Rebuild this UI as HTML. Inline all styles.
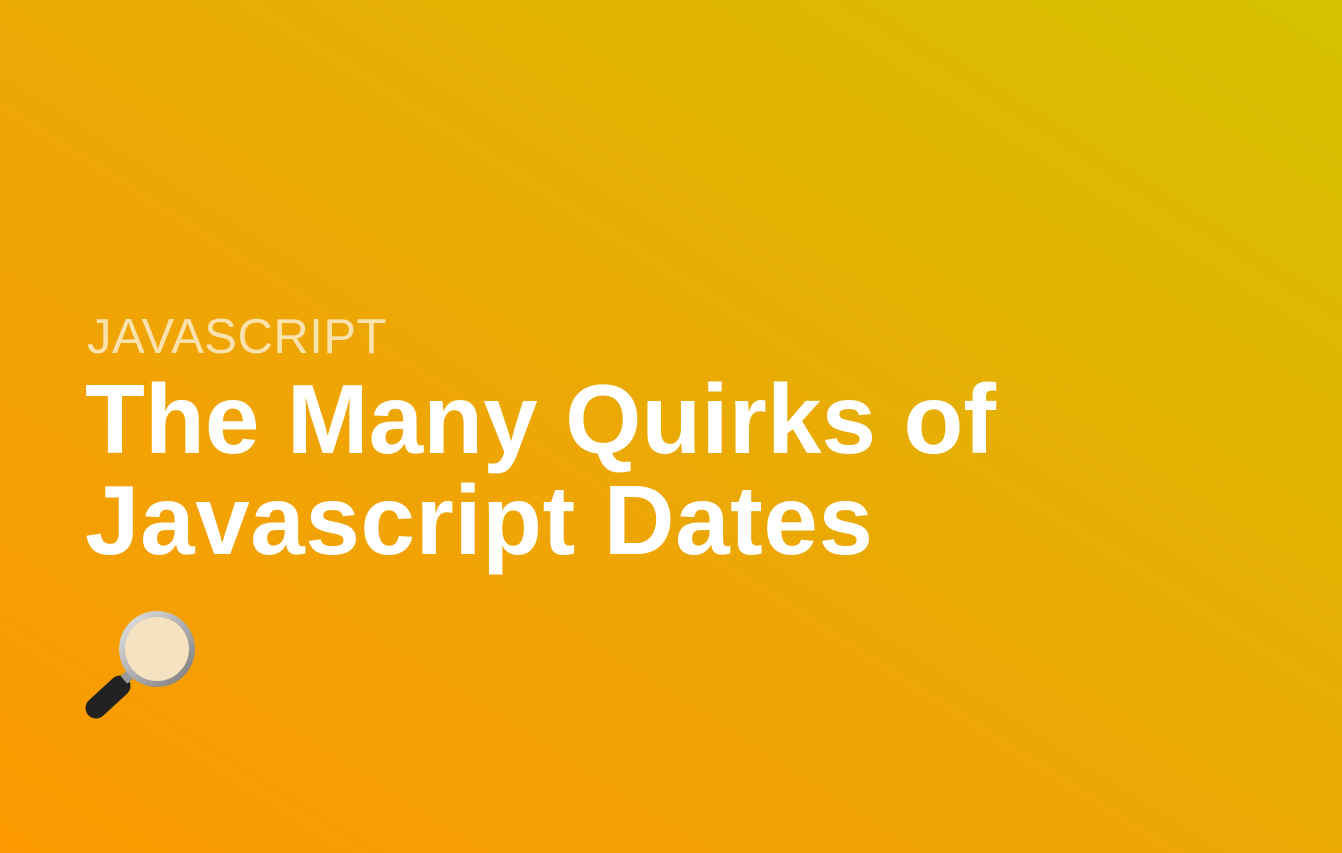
<!DOCTYPE html>
<html><head><style>
html,body{margin:0;padding:0}
body{width:1342px;height:853px;overflow:hidden;background:linear-gradient(to top right,#fc9900 0%,#eda705 45%,#d5c100 100%);font-family:"Liberation Sans",sans-serif;position:relative}
.k{position:absolute;left:87px;top:309px;font-size:49px;color:rgba(255,255,255,.68);letter-spacing:0.5px}
.t{position:absolute;left:85px;top:369px;font-size:98px;font-weight:bold;color:#fff;line-height:101px;letter-spacing:0.1px}
.t span{letter-spacing:0.6px}
svg{position:absolute;left:80px;top:600px}
</style></head><body>
<div class="k">JAVASCRIPT</div>
<div class="t">The Many Quirks of<br><span>Javascript Dates</span></div>
<svg width="130" height="130" viewBox="0 0 130 130">
<defs><linearGradient id="r" x1="0" y1="0" x2="1" y2="1"><stop offset="0" stop-color="#e8e8e8"/><stop offset="1" stop-color="#777"/></linearGradient></defs>
<line x1="16" y1="108" x2="40" y2="86" stroke="#222" stroke-width="21" stroke-linecap="round"/>
<line x1="44" y1="80" x2="54" y2="71" stroke="#999" stroke-width="10"/>
<circle cx="77" cy="49" r="38" fill="url(#r)"/>
<circle cx="77" cy="49" r="32" fill="#f4e2c0"/>
</svg>
</body></html>
